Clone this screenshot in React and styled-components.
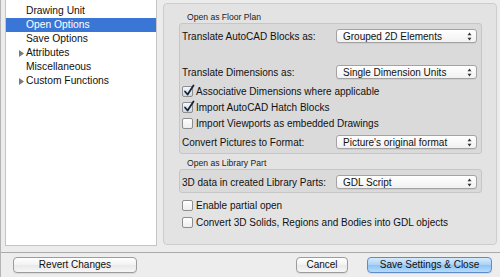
import React from "react";
import styled, { createGlobalStyle } from "styled-components";

const Global = createGlobalStyle`
  html, body { margin: 0; padding: 0; }
  body {
    background: #ececec;
    font-family: "Liberation Sans", Arial, sans-serif;
    font-size: 10px;
    color: #111;
  }
  * { box-sizing: border-box; }
`;

const Window = styled.div`
  width: 500px;
  height: 277px;
  display: flex;
  flex-direction: column;
  border-left: 1px solid #b4b4b4;
  background: #ececec;
  overflow: hidden;
`;

const Main = styled.div`
  height: 252px;
  display: flex;
  align-items: flex-start;
  padding: 0 3px 0 4px;
  gap: 6px;
`;

const List = styled.div`
  width: 152px;
  height: 246px;
  background: #fff;
  border: 1px solid #c4c4c4;
  border-top: none;
  padding-top: 4px;
  display: flex;
  flex-direction: column;
`;

const Item = styled.div`
  height: 14px;
  line-height: 14px;
  padding-left: 13px;
  display: flex;
  align-items: center;
  color: ${(p) => (p.$selected ? "#fff" : "#111")};
  background: ${(p) => (p.$selected ? "#3a76d6" : "transparent")};
  font-size: 10.3px;
  white-space: nowrap;
`;

const Disclosure = styled.span`
  width: 7px;
  display: inline-flex;
  align-items: center;
  flex: none;
`;

const Panel = styled.div`
  margin-top: 3px;
  flex: 1;
  height: 242px;
  background: #e3e3e3;
  border: 1px solid #cdcdcd;
  border-radius: 4px;
  padding: 8px 14px 0 15px;
  display: flex;
  flex-direction: column;
`;

const GroupLabel = styled.div`
  height: 11px;
  line-height: 11px;
  font-size: 8.6px;
  padding-left: 8px;
  color: #222;
  margin-top: ${(p) => p.$mt || 0}px;
`;

const Group = styled.div`
  background: #dadada;
  border: 1px solid #c6c6c6;
  border-radius: 3px;
  padding: ${(p) => p.$pad};
  display: flex;
  flex-direction: column;
`;

const FieldRow = styled.div`
  height: 16px;
  display: grid;
  grid-template-columns: 1fr 141px;
  align-items: center;
  margin-top: ${(p) => p.$mt || 0}px;
`;

const Spacer = styled.div`
  height: ${(p) => p.$h}px;
`;

const PopupBox = styled.div`
  height: 14px;
  border: 1px solid #a3a3a3;
  border-radius: 3px;
  background: linear-gradient(#ffffff, #f1f1f1);
  box-shadow: 0 1px 0 rgba(0,0,0,0.06);
  display: flex;
  align-items: center;
  justify-content: space-between;
  padding: 0 4px 0 6px;
  white-space: nowrap;
  color: #111;
`;

const CheckRow = styled.label`
  height: 16px;
  display: flex;
  align-items: center;
  gap: 3px;
  padding-left: ${(p) => p.$indent || 0}px;
  margin-top: ${(p) => p.$mt || 0}px;
  white-space: nowrap;
`;

const Box = styled.span`
  width: 11px;
  height: 11px;
  border: 1px solid #8e8e8e;
  border-radius: 2px;
  background: ${(p) =>
    p.$checked
      ? "linear-gradient(#f4f8fc, #c9d9ec)"
      : "linear-gradient(#ffffff, #ededed)"};
  position: relative;
  flex: none;
`;

const Mark = styled.svg`
  position: absolute;
  left: 0px;
  top: -3px;
`;

const Footer = styled.div`
  flex: 1;
  border-top: 1px solid #aaaaaa;
  display: flex;
  align-items: flex-start;
  padding: 4px 8px 0 12px;
  background: #ededed;
`;

const Button = styled.button`
  height: 16px;
  width: ${(p) => p.$w}px;
  margin-left: ${(p) => p.$ml || 0}px;
  border: 1px solid ${(p) => (p.$primary ? "#5d8ccc" : "#9c9c9c")};
  border-radius: 4px;
  background: ${(p) =>
    p.$primary
      ? "linear-gradient(#d6ebfc, #a9d2f7 50%, #8dc3f4 51%, #b7dbf9)"
      : "linear-gradient(#ffffff, #f2f2f2 50%, #e9e9e9 51%, #f6f6f6)"};
  font-family: "Liberation Sans", Arial, sans-serif;
  font-size: 10px;
  color: #111;
  padding: 0;
  line-height: 14px;
  box-shadow: 0 1px 0 rgba(0,0,0,0.08);
`;

const Grow = styled.div`
  flex: 1;
`;

function Arrows() {
  return (
    <svg width="5" height="9" viewBox="0 0 5 9">
      <path d="M2.5 0.5 L4.5 3.2 L0.5 3.2 Z" fill="#333" />
      <path d="M2.5 8.5 L4.5 5.8 L0.5 5.8 Z" fill="#333" />
    </svg>
  );
}

function Popup({ value }) {
  return (
    <PopupBox>
      <span>{value}</span>
      <Arrows />
    </PopupBox>
  );
}

function Check({ checked, children, indent, mt }) {
  return (
    <CheckRow $indent={indent} $mt={mt}>
      <Box $checked={checked}>
        {checked && (
          <Mark width="12" height="13" viewBox="0 0 12 13">
            <path
              d="M2 7.5 L4.6 10.5 L10.5 1.5"
              fill="none"
              stroke="#1c2330"
              strokeWidth="1.8"
              strokeLinecap="round"
              strokeLinejoin="round"
            />
          </Mark>
        )}
      </Box>
      <span>{children}</span>
    </CheckRow>
  );
}

const items = [
  { label: "Drawing Unit" },
  { label: "Open Options", selected: true },
  { label: "Save Options" },
  { label: "Attributes", tree: true },
  { label: "Miscellaneous" },
  { label: "Custom Functions", tree: true },
];

export default function App() {
  return (
    <>
      <Global />
      <Window>
        <Main>
          <List>
            {items.map((it) => (
              <Item key={it.label} $selected={it.selected}>
                <Disclosure>
                  {it.tree && (
                    <svg width="5" height="7" viewBox="0 0 5 7">
                      <path d="M0 0 L5 3.5 L0 7 Z" fill="#7a7a7a" />
                    </svg>
                  )}
                </Disclosure>
                {it.label}
              </Item>
            ))}
          </List>
          <Panel>
            <GroupLabel>Open as Floor Plan</GroupLabel>
            <Group $pad="4px 4px 3px 2px">
              <FieldRow>
                <span>Translate AutoCAD Blocks as:</span>
                <Popup value="Grouped 2D Elements" />
              </FieldRow>
              <Spacer $h={20} />
              <FieldRow>
                <span>Translate Dimensions as:</span>
                <Popup value="Single Dimension Units" />
              </FieldRow>
              <Check checked mt={3}>Associative Dimensions where applicable</Check>
              <Check checked>Import AutoCAD Hatch Blocks</Check>
              <Check>Import Viewports as embedded Drawings</Check>
              <FieldRow $mt={3}>
                <span>Convert Pictures to Format:</span>
                <Popup value="Picture's original format" />
              </FieldRow>
            </Group>
            <GroupLabel $mt={4}>Open as Library Part</GroupLabel>
            <Group $pad="4px 4px 2px 2px">
              <FieldRow>
                <span>3D data in created Library Parts:</span>
                <Popup value="GDL Script" />
              </FieldRow>
            </Group>
            <Check indent={3} mt={4}>Enable partial open</Check>
            <Check indent={3} mt={1}>Convert 3D Solids, Regions and Bodies into GDL objects</Check>
          </Panel>
        </Main>
        <Footer>
          <Button $w={124}>Revert Changes</Button>
          <Grow />
          <Button $w={52}>Cancel</Button>
          <Button $w={125} $ml={19} $primary>Save Settings &amp; Close</Button>
        </Footer>
      </Window>
    </>
  );
}
